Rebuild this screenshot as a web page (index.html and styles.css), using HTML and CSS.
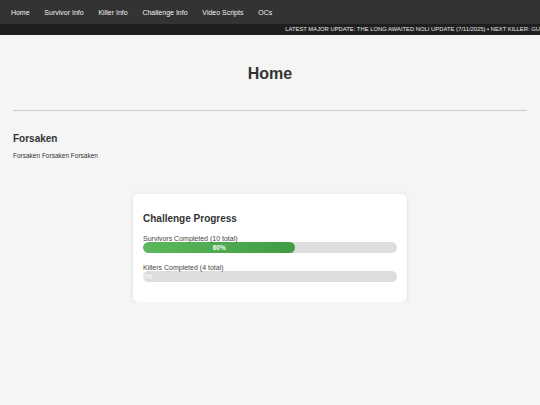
FILE: index.html
```html
<!DOCTYPE html>
<html lang="en">
<head>
    <meta charset="UTF-8">
    <meta name="viewport" content="width=device-width, initial-scale=1.0">
    <title>Forsaken - Home</title>
    <link rel="stylesheet" href="styles.css">
</head>
<body>
    <nav class="topnav">
        <a href="#">Home</a>
        <a href="#">Survivor Info</a>
        <a href="#">Killer Info</a>
        <a href="#">Challenge Info</a>
        <a href="#">Video Scripts</a>
        <a href="#">OCs</a>
    </nav>

    <div class="ticker">
        <span class="ticker-text">LATEST MAJOR UPDATE: THE LONG AWAITED NOLI UPDATE (7/11/2025) &bull; NEXT KILLER: GU</span>
    </div>

    <main class="content">
        <h1>Home</h1>
        <hr>

        <h2>Forsaken</h2>
        <p>Forsaken Forsaken Forsaken</p>

        <!-- challenge progress card -->
        <section class="progress-card">
            <h3>Challenge Progress</h3>

            <div class="progress-row">
                <label>Survivors Completed (10 total)</label>
                <div class="bar">
                    <div class="bar-fill" style="width: 60%;">60%</div>
                </div>
            </div>

            <div class="progress-row">
                <label>Killers Completed (4 total)</label>
                <div class="bar">
                    <div class="bar-fill empty" style="width: 0%;">0%</div>
                </div>
            </div>
        </section>
    </main>
</body>
</html>
```

FILE: styles.css
```css
body {
    font-family: "Liberation Sans", Arial, sans-serif;
    margin: 0;
    background-color: #f5f5f5;
    color: #333;
}

.topnav {
    display: flex;
    align-items: center;
    height: 24px;
    padding: 0 3.5px;
    background-color: #333;
}

.topnav a {
    color: #f2f2f2;
    text-decoration: none;
    font-size: 7px;
    padding: 0 7.4px;
}

.ticker {
    display: flex;
    justify-content: flex-end;
    height: 11px;
    line-height: 11px;
    background-color: #1f1f1f;
    color: #e6e6e6;
    font-size: 5.85px;
    white-space: nowrap;
    overflow: hidden;
}

.content {
    padding: 0 13px;
}

h1 {
    text-align: center;
    font-size: 16px;
    margin: 30px 0 27px;
}

hr {
    border: none;
    border-top: 1px solid #ccc;
    margin: 0;
}

h2 {
    font-size: 10px;
    margin: 22px 0 0;
}

p {
    font-size: 6.5px;
    margin: 8px 0 0;
}

.progress-card {
    width: 254px;
    margin: 35px auto 0;
    padding: 10px 10px 20px;
    background-color: #fff;
    border-radius: 5px;
    box-shadow: 0 1px 5px rgba(0, 0, 0, 0.1);
}

.progress-card h3 {
    font-size: 10px;
    margin: 9px 0 11px;
}

.progress-row {
    margin-top: 11px;
}

.progress-row:first-of-type {
    margin-top: 0;
}

.progress-row label {
    display: block;
    font-size: 7px;
    color: #444;
}

.bar {
    height: 11px;
    background-color: #ddd;
    border-radius: 6px;
    overflow: hidden;
}

.bar-fill {
    height: 100%;
    background: linear-gradient(90deg, #5cb85c, #3f9c43);
    border-radius: 6px;
    color: #fff;
    font-size: 6.5px;
    font-weight: bold;
    line-height: 11px;
    text-align: center;
}

.bar-fill.empty {
    background: none;
    text-align: left;
    color: #fff;
    font-weight: normal;
}
```
